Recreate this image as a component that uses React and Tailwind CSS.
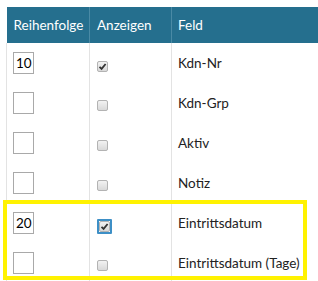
import React from "react";

const rows = [
  { order: "10", checked: true, field: "Kdn-Nr" },
  { order: "", checked: false, field: "Kdn-Grp" },
  { order: "", checked: false, field: "Aktiv" },
  { order: "", checked: false, field: "Notiz" },
  { order: "20", checked: true, field: "Eintrittsdatum", focus: true },
  { order: "", checked: false, field: "Eintrittsdatum (Tage)" },
];

function Check({ checked, focus }) {
  const box = (
    <span className="flex h-[11px] w-[11px] items-center justify-center rounded-[2px] border border-[#b3b3b3] bg-gradient-to-b from-[#f2f2f2] to-[#d9d9d9]">
      {checked && (
        <svg width="9" height="9" viewBox="0 0 9 9">
          <path d="M1.5 4.8 L3.6 6.9 L7.6 2" stroke="#333" strokeWidth="1.8" fill="none" />
        </svg>
      )}
    </span>
  );
  if (focus) {
    return <span className="inline-flex rounded-[1px] border-2 border-[#3d8fc6]">{box}</span>;
  }
  return <span className="inline-flex">{box}</span>;
}

export default function App() {
  return (
    <div className="relative h-[281px] w-[318px] overflow-hidden bg-white pl-[6px] pt-[7px] font-['Lato',sans-serif] text-[13.5px]">
      <table className="w-[330px] table-fixed border-collapse text-left">
        <colgroup>
          <col className="w-[83px]" />
          <col className="w-[82px]" />
          <col />
        </colgroup>
        <thead>
          <tr className="h-[36px] bg-[#256f8e] text-white">
            <th className="border-r border-[#4a8aa5] pl-[7px] pt-[1px] font-normal">Reihenfolge</th>
            <th className="border-r border-[#4a8aa5] pl-[7px] pt-[1px] font-normal">Anzeigen</th>
            <th className="pl-[6px] pt-[1px] font-normal">Feld</th>
          </tr>
        </thead>
        <tbody>
          {rows.map((r, i) => (
            <tr key={i} className="h-[40px]">
              <td className="border-l border-r border-[#e3e3e3] pl-[6px] align-top pt-[9px]">
                <div className="h-[22px] w-[21px] border border-[#a9a9a9] pl-[2px] leading-[20px] text-black">
                  {r.order}
                </div>
              </td>
              <td className="border-r border-[#e3e3e3] pl-[7px] align-top pt-[13px]">
                <Check checked={r.checked} focus={r.focus} />
              </td>
              <td className="pl-[6px] text-[#222]">{r.field}</td>
            </tr>
          ))}
        </tbody>
      </table>
      <div className="absolute left-[3px] top-[200px] h-[80px] w-[304px] border-4 border-[#fff200]" />
    </div>
  );
}
